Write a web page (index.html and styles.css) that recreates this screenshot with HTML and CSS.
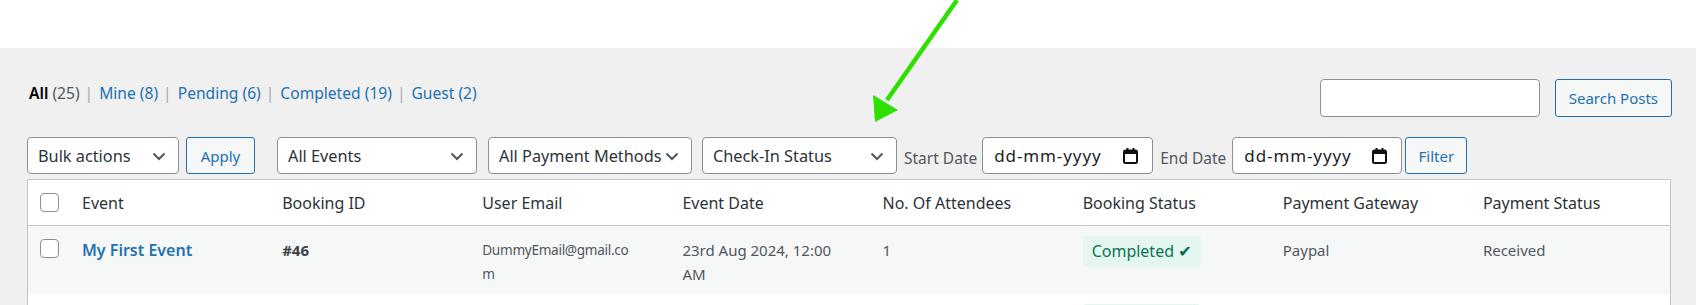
FILE: index.html
```html
<!DOCTYPE html>
<html lang="en">
<head>
    <meta charset="UTF-8">
    <title>Bookings</title>
    <link rel="stylesheet" href="styles.css">
</head>
<body>
    <div class="topbar"></div>

    <div class="wrap">
        <div class="list-top">
            <ul class="subsubsub">
                <li><a class="current">All <span class="count">(25)</span></a><span class="sep">|</span></li>
                <li><a>Mine <span class="count">(8)</span></a><span class="sep">|</span></li>
                <li><a>Pending <span class="count">(6)</span></a><span class="sep">|</span></li>
                <li><a>Completed <span class="count">(19)</span></a><span class="sep">|</span></li>
                <li><a>Guest <span class="count">(2)</span></a></li>
            </ul>
            <div class="search-box">
                <input type="search" class="search-input">
                <button class="button">Search Posts</button>
            </div>
        </div>

        <div class="tablenav">
            <select class="select bulk"><option>Bulk actions</option></select>
            <button class="button apply">Apply</button>
            <select class="select events"><option>All Events</option></select>
            <select class="select payment"><option>All Payment Methods</option></select>
            <select class="select checkin"><option>Check-In Status</option></select>
            <label class="date-label">Start Date</label>
            <div class="date-input">
                <span>dd-mm-yyyy</span>
                <svg width="15" height="16" viewBox="0 0 15 16"><rect x="1" y="2.5" width="13" height="12.5" rx="1.5" fill="none" stroke="#111" stroke-width="2"/><rect x="1" y="2.5" width="13" height="3.5" fill="#111"/><rect x="3.5" y="0" width="2" height="4" fill="#111"/><rect x="9.5" y="0" width="2" height="4" fill="#111"/></svg>
            </div>
            <label class="date-label">End Date</label>
            <div class="date-input end">
                <span>dd-mm-yyyy</span>
                <svg width="15" height="16" viewBox="0 0 15 16"><rect x="1" y="2.5" width="13" height="12.5" rx="1.5" fill="none" stroke="#111" stroke-width="2"/><rect x="1" y="2.5" width="13" height="3.5" fill="#111"/><rect x="3.5" y="0" width="2" height="4" fill="#111"/><rect x="9.5" y="0" width="2" height="4" fill="#111"/></svg>
            </div>
            <button class="button filter">Filter</button>
        </div>

        <table class="list-table">
            <thead>
                <tr>
                    <td class="check-column"><span class="checkbox"></span></td>
                    <th>Event</th>
                    <th>Booking ID</th>
                    <th>User Email</th>
                    <th>Event Date</th>
                    <th>No. Of Attendees</th>
                    <th>Booking Status</th>
                    <th>Payment Gateway</th>
                    <th>Payment Status</th>
                </tr>
            </thead>
            <tbody>
                <tr class="alternate">
                    <td class="check-column"><span class="checkbox"></span></td>
                    <td><a class="row-title">My First Event</a></td>
                    <td><strong class="booking-id">#46</strong></td>
                    <td class="email">DummyEmail@gmail.com</td>
                    <td class="date">23rd Aug 2024, 12:00 AM</td>
                    <td class="date">1</td>
                    <td><span class="status completed">Completed <span class="tick">&#10004;</span></span></td>
                    <td>Paypal</td>
                    <td>Received</td>
                </tr>
                <tr>
                    <td class="check-column"><span class="checkbox"></span></td>
                    <td><a class="row-title">My First Event</a></td>
                    <td><strong class="booking-id">#45</strong></td>
                    <td class="email">DummyEmail@gmail.com</td>
                    <td class="date">23rd Aug 2024, 12:00 AM</td>
                    <td class="date">1</td>
                    <td><span class="status completed">Completed <span class="tick">&#10004;</span></span></td>
                    <td>Paypal</td>
                    <td>Received</td>
                </tr>
            </tbody>
        </table>
    </div>

    <svg class="arrow" width="120" height="130" viewBox="0 0 120 130">
        <line x1="103" y1="0" x2="33" y2="100" stroke="#2ee000" stroke-width="4.5"/>
        <polygon points="21,122 19,95 44,110" fill="#2ee000"/>
    </svg>
</body>
</html>
```

FILE: styles.css
```css
body {
    margin: 0;
    background: #f0f0f1;
    color: #3c434a;
    font-family: "Noto Sans", sans-serif;
    overflow: hidden;
}

.topbar {
    height: 48px;
    background: #fff;
}

.wrap {
    position: relative;
    padding: 31px 25px 0 27px;
}

.list-top {
    display: flex;
    align-items: center;
    justify-content: space-between;
    height: 38px;
}

.subsubsub {
    list-style: none;
    margin: -10px 0 0 2px;
    padding: 0;
    display: flex;
    font-size: 15.6px;
    color: #a7aaad;
}

.subsubsub .sep {
    margin: 0 6px 0 5px;
}

.subsubsub a {
    color: #2271b1;
}

.subsubsub a.current {
    color: #000;
    font-weight: 600;
}

.subsubsub .count {
    color: #2271b1;
    font-weight: 400;
}

.subsubsub a.current .count {
    color: #50575e;
}

.search-box {
    display: flex;
    gap: 15px;
    margin-right: -1px;
}

.search-input {
    width: 220px;
    height: 38px;
    box-sizing: border-box;
    border: 1px solid #8c8f94;
    border-radius: 4px;
    background: #fff;
    margin: 0;
}

.button {
    height: 38px;
    box-sizing: border-box;
    padding: 0 13px;
    border: 1px solid #2271b1;
    border-radius: 3px;
    background: #f6f7f7;
    color: #2271b1;
    font-family: "Noto Sans", sans-serif;
    font-size: 15px;
    margin: 0;
}

.tablenav {
    display: flex;
    align-items: center;
    height: 37px;
    margin-top: 20px;
}

.tablenav .button {
    height: 37px;
}

.select {
    appearance: none;
    height: 37px;
    box-sizing: border-box;
    border: 1px solid #8c8f94;
    border-radius: 4px;
    background: #fff url("data:image/svg+xml;utf8,<svg xmlns='http://www.w3.org/2000/svg' width='20' height='20' viewBox='0 0 20 20'><path d='M4.5 7.5l5.5 5.5 5.5-5.5' fill='none' stroke='%2350575e' stroke-width='2'/></svg>") no-repeat right 9px center;
    color: #2c3338;
    font-family: "Noto Sans", sans-serif;
    font-size: 16.3px;
    padding: 0 30px 0 10px;
    margin: 0;
}

.bulk { width: 152px; }
.apply { width: 69px; margin-left: 7px; padding: 0; }
.events { width: 200px; margin-left: 22px; }
.payment { width: 204px; margin-left: 11px; padding-right: 24px; }
.checkin { width: 195px; margin-left: 10px; }

.date-label {
    font-size: 15.5px;
    color: #50575e;
    margin: 4px 5px 0 7px;
}

.date-label + .date-input.end {
    margin-left: 1px;
}

.date-input {
    width: 171px;
    height: 37px;
    box-sizing: border-box;
    display: flex;
    align-items: center;
    justify-content: space-between;
    padding: 0 14px 0 11px;
    border: 1px solid #8c8f94;
    border-radius: 4px;
    background: #fff;
    color: #1d2327;
    font-size: 17px;
    letter-spacing: 0.9px;
}

.date-input.end {
    width: 170px;
}

.filter {
    width: 62px;
    padding: 0;
    margin-left: 3px;
}

.list-table {
    width: 100%;
    margin-top: 5px;
    border: 1px solid #c3c4c7;
    border-spacing: 0;
    background: #fff;
    table-layout: fixed;
}

.list-table th,
.list-table td {
    text-align: left;
    vertical-align: top;
    padding: 0 34px 0 13px;
    font-size: 15px;
}

.list-table th {
    font-weight: 400;
    font-size: 16px;
    color: #2c3338;
    height: 45px;
    vertical-align: middle;
    border-bottom: 1px solid #c3c4c7;
}

.list-table thead .check-column {
    vertical-align: middle;
    border-bottom: 1px solid #c3c4c7;
}

.list-table .check-column {
    width: 41px;
    padding: 0 0 0 12px;
    box-sizing: border-box;
}

.list-table tbody td {
    height: 68px;
    box-sizing: border-box;
    padding-top: 12px;
    line-height: 24px;
    color: #50575e;
}

.list-table tbody .check-column {
    padding-top: 13px;
}

.alternate {
    background: #f6f7f7;
}

.checkbox {
    display: block;
    width: 19px;
    height: 19px;
    box-sizing: border-box;
    border: 1px solid #8c8f94;
    border-radius: 4px;
    background: #fff;
}

.row-title {
    color: #2271b1;
    font-weight: 600;
    font-size: 16px;
}

.booking-id {
    font-weight: 700;
    color: #3c434a;
}

.list-table td.email {
    font-size: 13.6px;
    letter-spacing: -0.3px;
    padding-right: 38px;
    overflow-wrap: anywhere;
}

.status {
    display: inline-block;
    margin-top: -2px;
    padding: 2px 9px;
    border-radius: 4px;
    line-height: 26px;
    font-size: 16px;
}

.status.completed {
    background: #e5f5ef;
    color: #0a7556;
}

.tick {
    font-family: "DejaVu Sans", sans-serif;
    font-size: 16px;
    color: #0b6b50;
}

.arrow {
    position: absolute;
    left: 854px;
    top: 0;
}
```
